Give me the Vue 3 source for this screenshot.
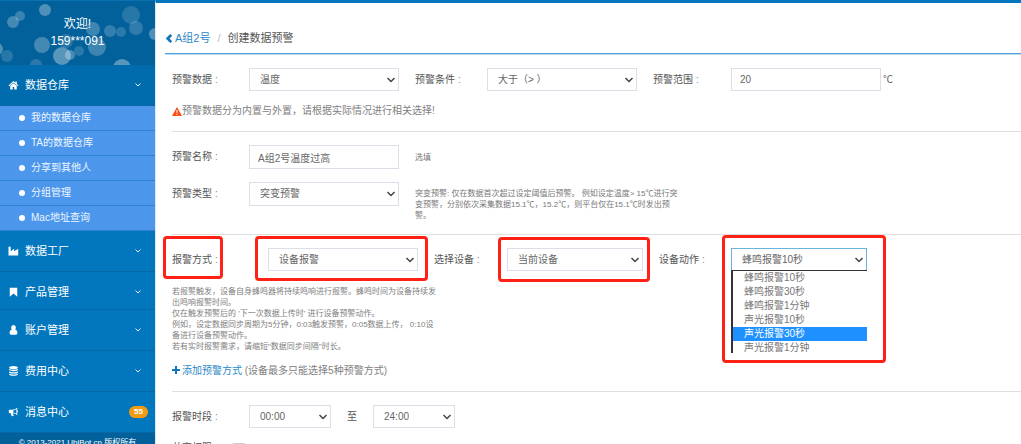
<script setup>
import { ref } from 'vue'

const openMenu = ['我的数据仓库', 'TA的数据仓库', '分享到其他人', '分组管理', 'Mac地址查询']
const menus = [
  { text: '数据工厂', icon: 'industry' },
  { text: '产品管理', icon: 'bookmark', compact: true },
  { text: '账户管理', icon: 'user' },
  { text: '费用中心', icon: 'database' },
  { text: '消息中心', icon: 'horn', badge: 55 },
]
const bubbles = [
  [45, 9, 6, 0.3], [13, 21, 6, 0.26], [20, 15, 5, 0.22], [93, 28, 7, 0.24], [110, 30, 6, 0.2],
  [121, 31, 5, 0.17], [131, 14, 9, 0.15], [136, 27, 7, 0.18], [155, 33, 6, 0.3], [-3, 48, 6, 0.3],
  [7, 55, 6, 0.15], [42, 44, 8, 0.26], [66, 40, 7, 0.15], [79, 50, 5, 0.16], [62, 55, 9, 0.34],
  [70, 54, 5, 0.28], [97, 46, 9, 0.24], [36, 64, 6, 0.16], [122, 67, 9, 0.34],
]
const actions = ['蜂鸣报警10秒', '蜂鸣报警30秒', '蜂鸣报警1分钟', '声光报警10秒', '声光报警30秒', '声光报警1分钟']
const range = ref('20')
const name = ref('A组2号温度过高')
const highlighted = 4
</script>

<template>
  <div class="page">
    <aside class="sidebar">
      <div class="profile">
        <svg class="bubbles" viewBox="0 0 155 64" preserveAspectRatio="none" aria-hidden="true">
          <circle v-for="(b, i) in bubbles" :key="i" :cx="b[0]" :cy="b[1]" :r="b[2]" :fill-opacity="b[3]" fill="#fff" />
        </svg>
        <div>欢迎!</div>
        <div>159***091</div>
      </div>
      <nav>
        <a href="#" class="item active">
          <svg class="ico" viewBox="0 0 16 16"><path d="M8 1.5 0 8.600l1.200 1.300L8 4l6.800 5.900L16 8.600 13.300 6.200V2.300h-2.300v1.900zM8 5.200 2.800 9.700V15h4v-4h2.400v4h4V9.700z" /></svg>
          <span>数据仓库</span>
          <svg class="chev" viewBox="0 0 8 6"><path d="M1.500 1.500 4 4l2.500-2.500" /></svg>
        </a>
        <ul class="sub">
          <li v-for="s in openMenu" :key="s"><a href="#">{{ s }}</a></li>
        </ul>
        <a v-for="m in menus" :key="m.text" href="#" class="item" :class="{ compact: m.compact }">
          <svg class="ico" viewBox="0 0 16 16">
            <path v-if="m.icon === 'industry'" d="M0 1h3.500v7.500L9 4.500v4l6.500-4V15H0z" />
            <path v-else-if="m.icon === 'bookmark'" d="M2 1h12v14.500L8 10.500 2 15.500z" />
            <path v-else-if="m.icon === 'user'" d="M8 0a3.800 4.200 0 0 1 2.800 7C13 7.800 14.300 10 14.300 12.500c0 1.800-.8 3-2.400 3H4.100c-1.600 0-2.400-1.200-2.400-3C1.700 10 3 7.800 5.200 7A3.800 4.200 0 0 1 8 0z" />
            <g v-else-if="m.icon === 'database'">
              <ellipse cx="8" cy="2.500" rx="7" ry="2.500" />
              <path d="M1 4.500c2.500 2 11.500 2 14 0v2c-1.500 2.500-12.500 2.500-14 0zM1 8.300c2.500 2 11.500 2 14 0v2c-1.500 2.500-12.500 2.500-14 0zM1 12c2.500 2 11.500 2 14 0v1.400c-1.500 3-12.500 3-14 0z" />
            </g>
            <path v-else fill-rule="evenodd" d="M14 1v4.500c1.600.3 1.600 2.700 0 3V13c-2.300-2-4.500-2.900-6.800-3.100-.8.900-.3 1.700.7 2.600-.2.700.2 1.100.8 1.600-.9 1-3 .8-3.900 0-.5-1.400-1-2.600-.6-4.300H2c-.9 0-1.500-.6-1.500-1.500V5.700c0-.9.600-1.500 1.500-1.500h4.300C9 4.200 11.500 3 14 1zm-1.400 2.600c-1.600 1.100-3.200 1.700-4.900 1.900v3.100c1.700.2 3.300.8 4.900 1.900z" />
          </svg>
          <span>{{ m.text }}</span>
          <b v-if="m.badge" class="badge">{{ m.badge }}</b>
          <svg v-else class="chev" viewBox="0 0 8 6"><path d="M1.500 1.500 4 4l2.500-2.500" /></svg>
        </a>
      </nav>
      <footer>© 2013-2021 UbiBot.cn 版权所有</footer>
    </aside>

    <main>
      <div class="crumbs">
        <a href="#"><svg class="back" viewBox="0 0 8 10"><path d="M6.500 1 2.500 5l4 4" /></svg>A组2号</a>
        <span class="slash">/</span>
        <span>创建数据预警</span>
      </div>

      <form class="form" @submit.prevent>
        <section class="sec-data">
          <div class="row">
            <label for="data">预警数据<i>:</i></label>
            <div class="field"><select id="data"><option>温度</option></select><svg class="arrow" viewBox="0 0 10 8"><path d="m1.500 2 3.500 3.500L8.500 2" /></svg></div>
            <label for="cond">预警条件<i>:</i></label>
            <div class="field"><select id="cond"><option>大于（&gt; ）</option></select><svg class="arrow" viewBox="0 0 10 8"><path d="m1.500 2 3.500 3.500L8.500 2" /></svg></div>
            <label for="range">预警范围<i>:</i></label>
            <div class="field"><input id="range" v-model="range" type="text" /></div>
            <span class="unit">℃</span>
          </div>
          <p class="warn">
            <svg viewBox="0 0 10 9"><path fill="#ff4a12" d="M5 0 10 9H0z" /><path fill="#fff" d="M4.400 3h1.200l-.2 3h-.8zM4.400 6.700h1.200v1.100H4.400z" /></svg>预警数据分为内置与外置，请根据实际情况进行相关选择!
          </p>
        </section>

        <section class="sec-name">
          <div class="row tall">
            <label for="name">预警名称<i>:</i></label>
            <div class="field"><input id="name" v-model="name" type="text" /></div>
            <small class="hint">选填</small>
          </div>
          <div class="row tall">
            <label for="type">预警类型<i>:</i></label>
            <div class="field"><select id="type"><option>突变预警</option></select><svg class="arrow" viewBox="0 0 10 8"><path d="m1.500 2 3.500 3.500L8.500 2" /></svg></div>
            <small class="hint long">突变预警: 仅在数据首次超过设定阈值后预警。 例如设定温度&gt; 15℃进行突<br />变预警，分别依次采集数据15.1℃，15.2℃，则平台仅在15.1℃时发出预<br />警。</small>
          </div>
        </section>

        <section class="sec-mode">
          <div class="row mode">
            <label for="mode" class="mark mark-label">报警方式<i>:</i></label>
            <div class="field mark mark-mode"><select id="mode"><option>设备报警</option></select><svg class="arrow" viewBox="0 0 10 8"><path d="m1.500 2 3.500 3.500L8.500 2" /></svg></div>
            <label for="device">选择设备<i>:</i></label>
            <div class="field mark mark-device"><select id="device"><option>当前设备</option></select><svg class="arrow" viewBox="0 0 10 8"><path d="m1.500 2 3.500 3.500L8.500 2" /></svg></div>
            <label for="action">设备动作<i>:</i></label>
            <div class="field mark mark-action">
              <select id="action" class="focus"><option v-for="a in actions" :key="a">{{ a }}</option></select>
              <svg class="arrow" viewBox="0 0 10 8"><path d="m1.500 2 3.500 3.500L8.500 2" /></svg>
              <ul class="options" role="listbox" aria-label="设备动作">
                <li v-for="(a, i) in actions" :key="a" role="option" :aria-selected="i === highlighted" :class="{ on: i === highlighted }">{{ a }}</li>
              </ul>
            </div>
          </div>
          <p class="notes">若报警触发，设备自身蜂鸣器将持续鸣响进行报警。蜂鸣时间为设备持续发<br />出鸣响报警时间。<br />仅在触发预警后的 '下一次数据上传时' 进行设备预警动作。<br />例如，设定数据同步周期为5分钟，0:03触发预警，0:05数据上传， 0:10设<br />备进行设备预警动作。<br />若有实时报警需求，请缩短"数据同步间隔"时长。</p>
          <div class="add">
            <a href="#"><svg viewBox="0 0 8 8"><path d="M3 0h2v3h3v2H5v3H3V5H0V3h3z" /></svg>添加预警方式</a>
            (设备最多只能选择5种预警方式)
          </div>
        </section>

        <section class="sec-time">
          <div class="row time">
            <label for="from">报警时段<i>:</i></label>
            <div class="field"><select id="from"><option>00:00</option></select><svg class="arrow" viewBox="0 0 10 8"><path d="m1.500 2 3.500 3.500L8.500 2" /></svg></div>
            <label for="to">至</label>
            <div class="field"><select id="to"><option>24:00</option></select><svg class="arrow" viewBox="0 0 10 8"><path d="m1.500 2 3.500 3.500L8.500 2" /></svg></div>
          </div>
          <div class="switch-row">
            <label for="share">共享权限<i>:</i></label>
            <input id="share" type="checkbox" class="switch" />
          </div>
        </section>
      </form>
    </main>
  </div>
</template>

<style>
body { overflow: hidden; }
</style>

<style scoped>
* { box-sizing: border-box; }
.page {
  display: grid;
  grid-template-columns: 155px minmax(0, 1fr);
  height: 100vh;
  overflow: hidden;
  background: #fff;
  color: #666;
  font: 10px/14px "Liberation Sans", "Noto Sans CJK SC", sans-serif;
}
a { color: #2a88c8; text-decoration: none; }
ul { list-style: none; margin: 0; padding: 0; }
p { margin: 0; }

.sidebar { background: #0277bd; border-top: 1px solid #0872b3; color: #fff; }
.profile {
  position: relative;
  height: 64px;
  padding-top: 15px;
  background: #02609a;
  text-align: center;
  font-size: 12px;
  line-height: 17px;
}
.profile div { position: relative; }
.bubbles { position: absolute; inset: 0; width: 100%; height: 100%; }
.item {
  display: flex;
  align-items: center;
  height: 41px;
  padding: 0 13px 0 8px;
  border-bottom: 1px solid #0568a8;
  color: #fff;
  font-size: 11px;
}
.item.compact { height: 38px; padding-top: 2px; }
.item.active { background: #006cae; }
.item span { flex: 1; }
.ico { width: 11px; height: 10px; margin-right: 6px; fill: #fff; }
.chev { width: 8px; height: 6px; fill: none; stroke: #e8f3fb; stroke-width: 1; }
.badge {
  margin-right: -6px;
  padding: 0 5px;
  border-radius: 6px;
  background: #f39c12;
  font-size: 8px;
  line-height: 12px;
}
.sub a {
  display: flex;
  align-items: center;
  height: 25px;
  padding-left: 19px;
  border-bottom: 1px solid #2b82cd;
  background: #4c97ec;
  color: #eef6ff;
}
.sub a::before { content: ""; width: 6px; height: 6px; margin-right: 6px; border-radius: 50%; background: #fff; }
footer {
  height: 40px;
  padding-top: 3px;
  background: #02609a;
  text-align: center;
  font-size: 8px;
  line-height: 14px;
  white-space: nowrap;
}

main { border-top: 3px solid #0277bd; border-left: 1px solid #dbe9f8; }
.crumbs {
  display: flex;
  gap: 7px;
  margin-left: 9px;
  padding: 28px 0 7px;
  border-bottom: 1px solid #4e9fdf;
  box-shadow: 0 1px 0 #bbdcf5;
  font-size: 11px;
  line-height: 15px;
  color: #555;
}
.back { width: 8px; height: 9px; margin-right: 2px; fill: none; stroke: #1077be; stroke-width: 3; vertical-align: -1px; }
.slash { color: #bbb; }

.form { margin-left: 16px; }
section + section { border-top: 1px solid #dedfe1; }
.sec-data { height: 77px; padding-top: 14px; }
.row {
  display: grid;
  grid-template-columns: 61fr 150fr 56fr 150fr 62fr 150fr 124fr;
  grid-template-rows: 23px;
  column-gap: 16px;
  align-items: center;
}
label { color: #555; white-space: nowrap; }
label i { margin-left: 3px; font-style: normal; color: #888; }
.field { position: relative; height: 100%; }
select, input[type="text"] {
  display: block;
  width: 100%;
  height: 100%;
  margin: 0;
  padding: 0 10px;
  border: 1px solid #dddfe8;
  border-radius: 0;
  outline: none;
  background: #fff;
  color: #666;
  font: inherit;
  appearance: none;
}
input[type="text"] { padding: 0 8px; }
select.focus { border-color: #6db3e0; }
.arrow {
  position: absolute;
  top: 50%;
  right: 3px;
  width: 10px;
  height: 8px;
  margin-top: -4px;
  fill: none;
  stroke: #444;
  stroke-width: 1.500;
  pointer-events: none;
}
.unit { margin-left: -14px; }
.warn { display: flex; align-items: center; margin-top: 13px; color: #808080; }
.warn svg { width: 10px; height: 9px; }

.sec-name { height: 103px; padding-top: 13px; }
.row.tall { grid-template-rows: 24px; }
.row.tall + .row.tall { margin-top: 13px; }
.hint { font-size: 8px; line-height: 11px; color: #777; white-space: nowrap; }
.hint.long { grid-column: 3 / -1; align-self: start; height: 18px; padding-top: 6px; }

.sec-mode { height: 157px; padding-top: 13px; }
.row.mode { grid-template-columns: 80fr 150fr 57fr 136fr 56fr 136fr 138fr; }
.mark { position: relative; }
.mark::after {
  content: "";
  position: absolute;
  border: 3px solid #ff2115;
  border-radius: 4px;
  pointer-events: none;
}
.mark-label { justify-self: start; }
.mark-label::after { inset: -17px -5px -12px -9px; }
.mark-mode::after { inset: -12px -10px -10px -13px; }
.mark-device::after { inset: -11px -7px -11px -9px; }
.mark-action::after { inset: -13px -19px -92px -9px; }
.options {
  position: absolute;
  top: 100%;
  left: 0;
  display: flex;
  flex-direction: column;
  width: 100%;
  height: 83px;
  margin-top: -1px;
  border-top: 1px solid #333;
  border-left: 2px solid #333;
  background: #fff;
  color: #777;
}
.options li { display: flex; flex: 1; align-items: center; padding-left: 11px; }
.options .on { background: #1e90ff; color: #fff; }
.notes { margin-top: 15px; font-size: 8px; line-height: 11px; color: #808080; white-space: nowrap; }
.add { margin-top: 12px; color: #808080; }
.add svg { width: 8px; height: 8px; margin-right: 2px; fill: #1077be; }

.sec-time { padding-top: 13px; }
.row.time { grid-template-columns: 61fr 82fr 10fr 82fr 550fr; }
.switch-row { display: flex; align-items: center; gap: 12px; margin-top: 13px; }
.switch { width: 18px; height: 10px; margin: 0; border-radius: 5px; background: #ccc; appearance: none; }
</style>
